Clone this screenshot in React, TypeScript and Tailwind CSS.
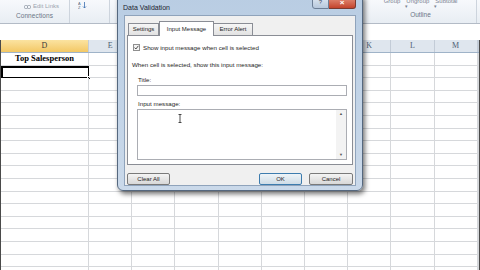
import type { FunctionComponent } from "react";

const COLS = "grid grid-cols-[88px_repeat(9,43.2px)_1fr]";
// F to J sit under the dialog, so their headers stay blank
const LETTERS = ["D", "E", "", "", "", "", "", "K", "L", "M", ""];
const ROWS = 18;

const Ribbon: FunctionComponent = () => (
  <div className="flex h-[24px] border-b border-[#b3bbc6] bg-gradient-to-b from-[#f7f9fc] to-[#e8edf3] text-[#6a7585]">
    <div className="flex w-[70px] flex-col items-center border-r border-[#cdd4dd]">
      <div className="mt-[2px] flex items-center gap-[2px] pl-[14px] text-[6px] text-[#9aa3ae]">
        <svg width="7" height="6" viewBox="0 0 7 6">
          <rect x="0.5" y="1.5" width="3" height="3" rx="1" fill="none" stroke="#9aa3ae" />
          <rect x="3.5" y="1.5" width="3" height="3" rx="1" fill="none" stroke="#9aa3ae" />
        </svg>
        <span>Edit Links</span>
      </div>
      <div className="mt-auto mb-[3px] text-[6.5px] tracking-[0.1px]">Connections</div>
    </div>
    <div className="flex w-[40px] border-r border-[#cdd4dd] pl-[8px] pt-[1px]">
      <svg width="10" height="8" viewBox="0 0 10 8">
        <text x="0" y="4" fontSize="4" fill="#5b6b80" fontFamily="Liberation Sans, sans-serif">
          A
        </text>
        <text x="0" y="8" fontSize="4" fill="#5b6b80" fontFamily="Liberation Sans, sans-serif">
          Z
        </text>
        <path d="M6.5 1v6M5 5.5l1.5 1.5 1.5-1.5" stroke="#3a6fb0" strokeWidth="0.8" fill="none" />
      </svg>
    </div>
    <div className="flex-1" />
    <div className="flex w-[112px] flex-col items-center border-r border-[#cdd4dd]">
      <div className="-mt-[3px] flex gap-[6px] text-[6px] text-[#7b8594]">
        <span>Group</span>
        <span>Ungroup</span>
        <span>Subtotal</span>
      </div>
      <div className="-mt-[2px] flex gap-[26px] text-[5px] leading-none text-[#7b8594]">
        <span>▾</span>
        <span>▾</span>
      </div>
      <div className="mt-auto mb-[3px] text-[6.5px]">Outline</div>
    </div>
    <div className="w-[3px]" />
  </div>
);

const Sheet: FunctionComponent = () => (
  <div className="border-x border-[#4a4a4a] font-['Liberation_Serif',serif]">
    <div className={`${COLS} h-[13px] border-b border-[#9fb3c8] bg-[#dfe6ee]`}>
      {LETTERS.map((letter, i) => (
        <div
          key={i}
          className={`flex items-center justify-center border-r border-[#c3ccd7] text-[8px] ${
            i === 0
              ? "bg-gradient-to-b from-[#fbe3a0] to-[#f3c864] text-[#3a3a3a]"
              : "text-[#4d5e74]"
          }`}
        >
          {letter}
        </div>
      ))}
    </div>
    <div className={`${COLS} auto-rows-[12.6px]`}>
      {Array.from({ length: ROWS }).flatMap((_, r) =>
        LETTERS.map((_, c) => {
          const selected = r === 1 && c === 0;
          return (
            <div
              key={`${r}-${c}`}
              className={`relative border-r border-b border-[#d6d8db] ${
                selected ? "border-2 border-black" : ""
              }`}
            >
              {r === 0 && c === 0 && (
                <div className="flex h-full items-center justify-center text-[8.5px] font-bold text-black">
                  Top Salesperson
                </div>
              )}
              {selected && (
                <div className="absolute -right-[3px] -bottom-[3px] size-[4px] border border-white bg-black" />
              )}
            </div>
          );
        })
      )}
    </div>
  </div>
);

const Button: FunctionComponent<{ label: string; primary?: boolean; width: string }> = ({
  label,
  primary,
  width,
}) => (
  <div
    className={`flex h-[12px] items-center justify-center rounded-[2px] border text-[6px] text-[#1e1e1e] ${width} ${
      primary
        ? "border-[#3d7cae] bg-gradient-to-b from-[#eef4f8] to-[#cfdce6]"
        : "border-[#7a7a7a] bg-gradient-to-b from-[#f4f4f4] to-[#d8d8d8]"
    }`}
  >
    {label}
  </div>
);

const Dialog: FunctionComponent = () => (
  <div className="absolute left-[117px] top-[-5px] flex h-[196px] w-[246px] flex-col rounded-b-[6px] border border-[#55687f] bg-gradient-to-b from-[#b9cde3] to-[#cad9ea] px-[6px] pb-[4px] shadow-[2px_3px_5px_rgba(0,0,0,0.55)] font-['Liberation_Sans',sans-serif]">
    <div className="flex h-[19px] items-start">
      <span className="mt-[7px] -ml-[1px] text-[7px] text-[#1b2430]">Data Validation</span>
      <div className="ml-auto flex h-[13px]">
        <div className="flex w-[17px] items-center justify-center rounded-bl-[3px] border border-[#6d7f96] bg-gradient-to-b from-[#dfe8f2] to-[#b7c8dc] text-[6px] text-[#3e4d60]">
          ?
        </div>
        <div className="flex w-[27px] items-center justify-center rounded-br-[3px] border border-l-0 border-[#7a3a30] bg-gradient-to-b from-[#e3907c] to-[#c3432c] text-[8px] font-bold text-white">
          ×
        </div>
      </div>
    </div>
    <div className="flex flex-1 flex-col border border-[#8fa3bb] bg-[#f0f0f0] px-[2px]">
      <div className="mt-[5px] flex items-end pl-[1px] text-[6px] text-[#1e1e1e]">
        <div className="flex h-[12px] w-[31px] items-center justify-center border border-b-0 border-[#8a8d95] bg-gradient-to-b from-[#f6f6f6] to-[#e2e2e2]">
          Settings
        </div>
        <div className="relative z-10 -mb-px flex h-[15px] w-[55px] items-center justify-center border border-b-0 border-[#8a8d95] bg-white">
          Input Message
        </div>
        <div className="flex h-[12px] w-[39px] items-center justify-center border border-b-0 border-l-0 border-[#8a8d95] bg-gradient-to-b from-[#f6f6f6] to-[#e2e2e2]">
          Error Alert
        </div>
      </div>
      <div className="flex h-[130px] flex-col border border-[#8a8d95] bg-white pl-[4px] pr-[5px] text-[6.2px] text-[#1e1e1e]">
        <div className="mt-[7px] flex items-center gap-[3px] pl-[1px]">
          <div className="flex size-[7px] items-center justify-center border border-[#8f8f8f] bg-[#f4f4f4]">
            <svg width="5" height="5" viewBox="0 0 5 5">
              <path d="M0.6 2.6l1.3 1.4L4.4 0.8" stroke="#3b3b3b" strokeWidth="0.9" fill="none" />
            </svg>
          </div>
          <span>Show input message when cell is selected</span>
        </div>
        <div className="mt-[8px]">When cell is selected, show this input message:</div>
        <div className="mt-[5px] pl-[6px]">Title:</div>
        <div className="ml-[5px] mt-[1px] h-[11px] border border-[#abadb3] bg-white" />
        <div className="mt-[3px] pl-[6px]">Input message:</div>
        <div className="relative ml-[5px] mt-[1px] flex h-[51px] border border-[#abadb3] bg-white">
          <div className="flex-1" />
          <div className="flex w-[10px] flex-col items-center justify-between bg-[#f3f3f3] py-[2px] text-[4px] leading-none text-[#555]">
            <span>▲</span>
            <span>▼</span>
          </div>
          <svg className="absolute left-[40px] top-[4px]" width="4" height="9" viewBox="0 0 4 9">
            <path d="M0.5 0.5h3M2 0.5v8M0.5 8.5h3" stroke="#222" strokeWidth="0.8" fill="none" />
          </svg>
        </div>
      </div>
      <div className="mt-[8px] flex">
        <Button label="Clear All" width="w-[43px]" />
        <div className="flex-1" />
        <Button label="OK" primary width="w-[43px]" />
        <div className="w-[7px]" />
        <Button label="Cancel" width="w-[44px]" />
      </div>
    </div>
  </div>
);

export default function App() {
  return (
    <div className="relative h-[270px] w-[480px] overflow-hidden bg-white font-['Liberation_Sans',sans-serif]">
      <Ribbon />
      <div className="h-[16px] bg-white" />
      <Sheet />
      <Dialog />
    </div>
  );
}
